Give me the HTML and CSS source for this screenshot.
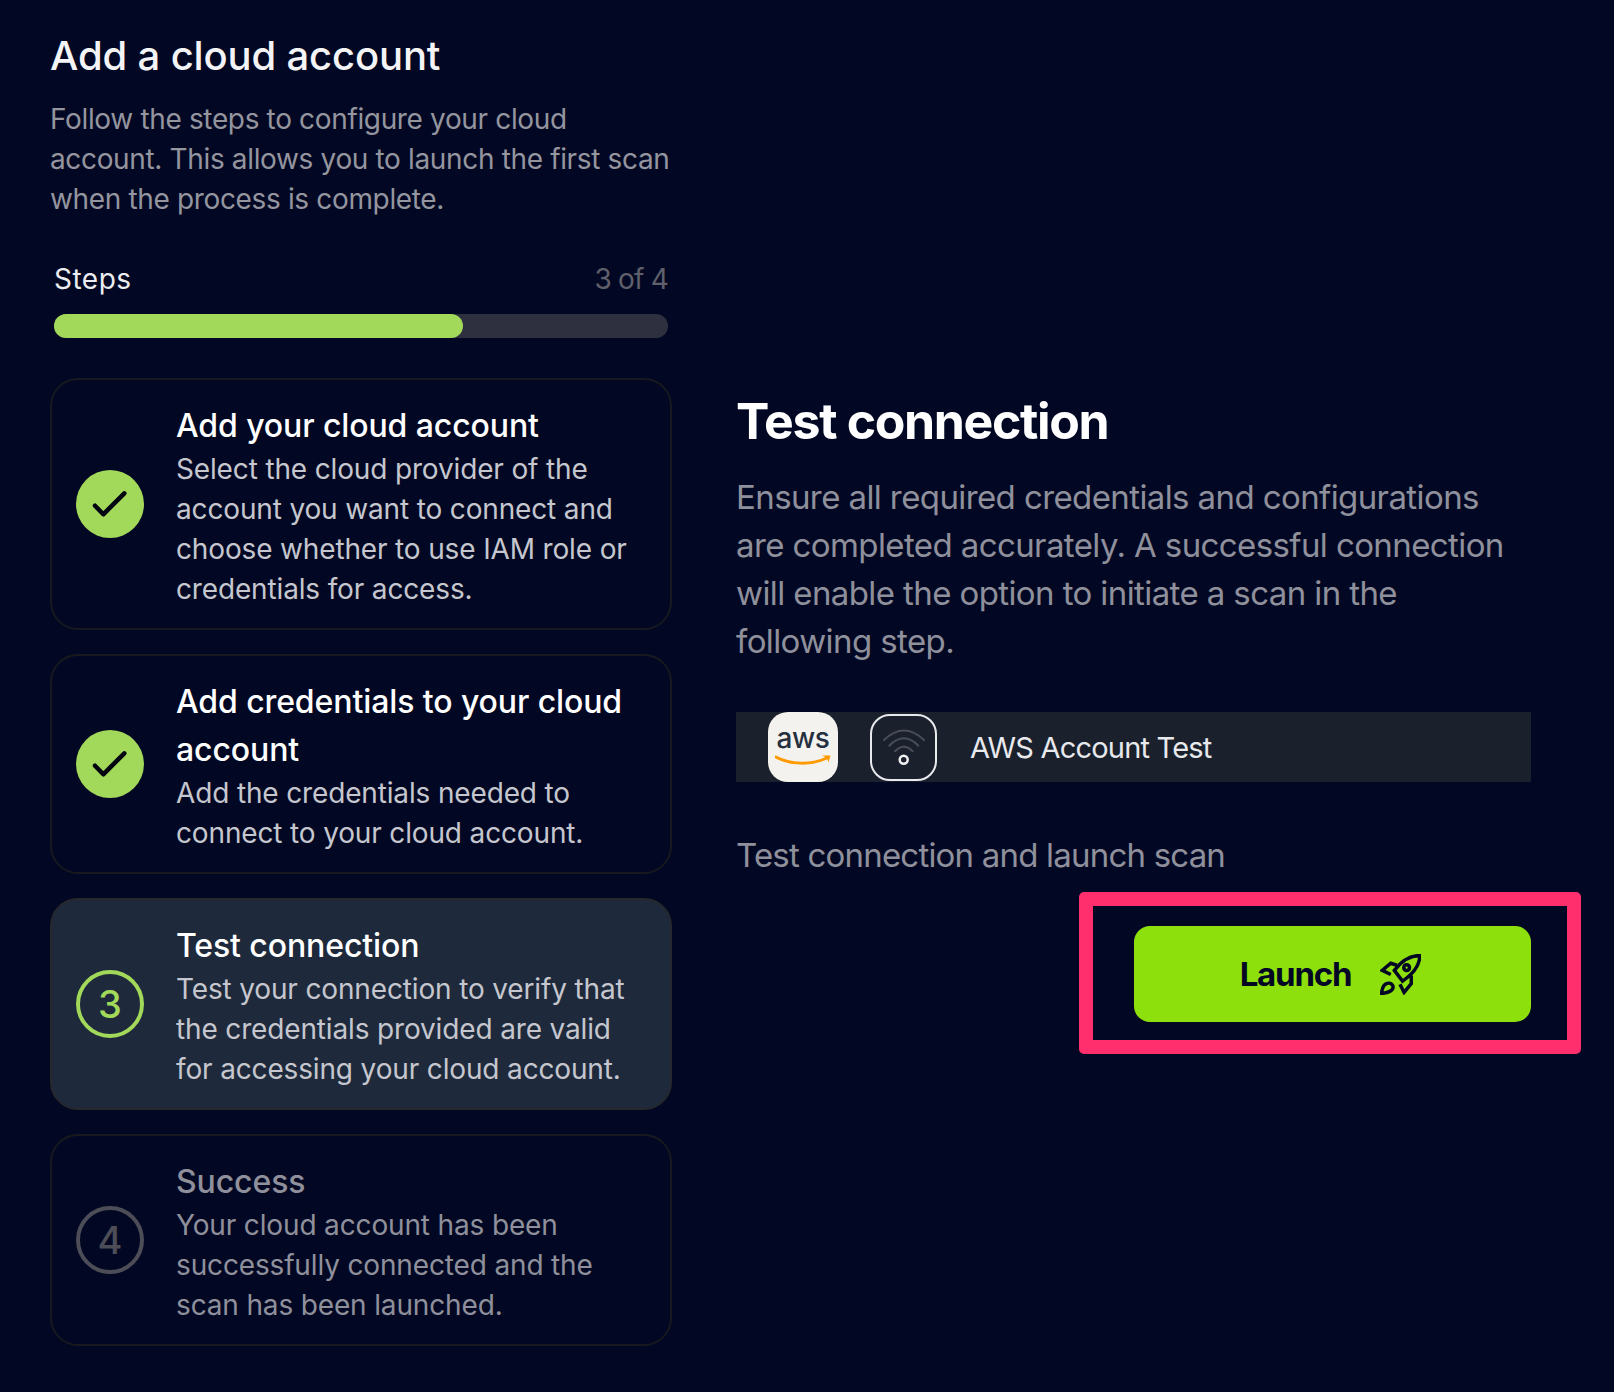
FILE: index.html
```html
<!DOCTYPE html>
<html lang="en">
<head>
<meta charset="utf-8">
<title>Add a cloud account</title>
<link rel="stylesheet" href="styles.css">
</head>
<body>
<main class="page">
  <section class="left">
    <h1 class="title">Add a cloud account</h1>
    <p class="intro">Follow the steps to configure your cloud<br>account. This allows you to launch the first scan<br>when the process is complete.</p>
    <div class="steps-head"><span class="steps-label">Steps</span><span class="steps-count">3 of 4</span></div>
    <div class="track"><div class="fill"></div></div>
    <ol class="steps">
      <li class="step">
        <span class="badge badge-done"><svg viewBox="0 0 68 68" class="check"><path d="M19 35.7l8.3 8.6 21-21"/></svg></span>
        <div class="step-body">
          <h2 class="step-title">Add your cloud account</h2>
          <p class="step-text">Select the cloud provider of the<br>account you want to connect and<br>choose whether to use IAM role or<br>credentials for access.</p>
        </div>
      </li>
      <li class="step">
        <span class="badge badge-done"><svg viewBox="0 0 68 68" class="check"><path d="M19 35.7l8.3 8.6 21-21"/></svg></span>
        <div class="step-body">
          <h2 class="step-title">Add credentials to your cloud<br>account</h2>
          <p class="step-text">Add the credentials needed to<br>connect to your cloud account.</p>
        </div>
      </li>
      <li class="step step-active">
        <span class="badge badge-current">3</span>
        <div class="step-body">
          <h2 class="step-title">Test connection</h2>
          <p class="step-text">Test your connection to verify that<br>the credentials provided are valid<br>for accessing your cloud account.</p>
        </div>
      </li>
      <li class="step step-todo">
        <span class="badge badge-todo">4</span>
        <div class="step-body">
          <h2 class="step-title">Success</h2>
          <p class="step-text">Your cloud account has been<br>successfully connected and the<br>scan has been launched.</p>
        </div>
      </li>
    </ol>
  </section>
  <section class="right">
    <h2 class="heading">Test connection</h2>
    <p class="lead">Ensure all required credentials and configurations<br>are completed accurately. A successful connection<br>will enable the option to initiate a scan in the<br>following step.</p>
    <div class="account">
      <span class="aws">
        <span class="aws-word">aws</span>
        <svg class="aws-smile" viewBox="0 0 56 10"><path class="smile-line" d="M1 2C15 10 37 10 52 3"/><path class="smile-head" d="M47 .5h8.500l-2 7-1.500-4.500z"/></svg>
      </span>
      <span class="signal">
        <svg viewBox="0 0 67 67"><path class="arc" d="M14 26Q34 7 54 26"/><path class="arc" d="M19.300 31.700Q34 17 48.300 31.700"/><path class="arc" d="M25 37.300Q34 28 42.700 37.300"/><circle class="dot" cx="33.700" cy="45.700" r="4"/></svg>
      </span>
      <span class="account-name">AWS Account Test</span>
    </div>
    <p class="sub">Test connection and launch scan</p>
    <div class="actions">
      <div class="highlight-wrap">
        <button class="launch" type="button">
          <span>Launch</span>
          <svg class="rocket" viewBox="0 0 40 40"><path d="M38.800 1.500C30 1.500 21.500 6 14 16L22 26.500C33 19 38.800 11 38.800 1.500Z"/><path d="M16.500 11L10.500 9L2.200 16L10.500 20"/><path d="M30.500 21L30.500 29L23.500 37.500L19.500 29.500"/><path d="M1.500 38.500C2 33 3.500 29 7.500 28.500C10.500 28 12.800 30 12.800 32.500C12.800 35.500 8 38 1.500 38.500Z"/><circle cx="26" cy="13.300" r="2.800"/></svg>
        </button>
        <span class="annotation"></span>
      </div>
    </div>
  </section>
</main>
</body>
</html>
```
FILE: styles.css
```css
* { box-sizing: border-box; }
html, body { margin: 0; padding: 0; }
body {
  background: #020823;
  font-family: Inter, "Noto Sans", sans-serif;
  color: #fff;
  height: 1392px;
  overflow: hidden;
}
h1, h2, p, ol { margin: 0; padding: 0; }
ol { list-style: none; }

.page {
  display: grid;
  grid-template-columns: 622px 795px;
  column-gap: 64px;
  padding: 28px 0 46px 50px;
}

/* left column */
.title {
  font-size: 40px;
  line-height: 56px;
  font-weight: 450;
  letter-spacing: -0.15px;
  color: #f4f4f6;
}
.intro {
  margin-top: 15px;
  font-size: 28px;
  line-height: 40px;
  letter-spacing: -0.35px;
  color: #94959f;
}
.steps-head {
  display: flex;
  justify-content: space-between;
  margin: 40px 4px 15px 4px;
  font-size: 28px;
  line-height: 40px;
}
.steps-label { color: #ecedf0; letter-spacing: 0.5px; }
.steps-count { color: #5f606b; letter-spacing: -0.8px; }
.track {
  height: 24px;
  margin: 0 4px 40px 4px;
  border-radius: 12px;
  background: #2e3040;
}
.fill {
  width: 66.6%;
  height: 100%;
  border-radius: 12px;
  background: #a3d95a;
}
.steps { display: flex; flex-direction: column; gap: 24px; }
.step {
  display: flex;
  align-items: center;
  gap: 32px;
  padding: 20px 24px;
  border: 2px solid #17191f;
  border-radius: 28px;
}
.step-active { background: #1e2a3b; border-color: #26282e; }
.badge {
  flex: none;
  width: 68px;
  height: 68px;
  border-radius: 50%;
  display: flex;
  align-items: center;
  justify-content: center;
  font-size: 38px;
  font-weight: 450;
  line-height: 1;
}
.badge-done { background: #a3d95a; }
.badge-current { border: 4px solid #a3d95a; color: #a3d95a; }
.badge-todo { border: 4px solid #4c4d57; color: #4c4d57; }
.check { width: 68px; height: 68px; }
.check path { fill: none; stroke: #02040f; stroke-width: 4.500; stroke-linecap: round; stroke-linejoin: round; }
.step-body { padding-top: 1px; margin-bottom: -1px; }
.step-title {
  padding-top: 1px;
  margin-bottom: -1px;
  font-size: 32px;
  line-height: 48px;
  font-weight: 450;
  letter-spacing: -0.1px;
  color: #fff;
}
.step-text {
  font-size: 28px;
  line-height: 40px;
  letter-spacing: -0.15px;
  color: #c5c6ce;
}
.step-todo .step-title, .step-todo .step-text { color: #8f909b; }

/* right column */
.right { padding-top: 361px; }
.heading {
  font-size: 50px;
  line-height: 64px;
  font-weight: 700;
  letter-spacing: -1.35px;
  color: #fff;
}
.lead {
  margin-top: 20px;
  font-size: 33px;
  line-height: 48px;
  letter-spacing: -0.6px;
  color: #8f909b;
}
.account {
  display: flex;
  align-items: center;
  height: 70px;
  margin-top: 47px;
  padding-left: 32px;
  background: #1a202c;
}
.aws {
  flex: none;
  width: 70px;
  height: 70px;
  padding-top: 14px;
  border-radius: 20px;
  background: #f4f2ef;
  display: flex;
  flex-direction: column;
  align-items: center;
  gap: 5px;
}
.aws-word {
  font-size: 28px;
  line-height: 24px;
  font-weight: 500;
  letter-spacing: -0.4px;
  color: #252f3e;
}
.aws-smile { width: 56px; height: 10px; flex: none; }
.smile-line { fill: none; stroke: #f90; stroke-width: 3; stroke-linecap: round; }
.smile-head { fill: #f90; }
.signal {
  flex: none;
  width: 67px;
  height: 67px;
  margin-left: 32px;
  border: 2px solid #e8e9ec;
  border-radius: 20px;
  display: flex;
}
.signal svg { width: 67px; height: 67px; margin: -2px; flex: none; }
.arc { fill: none; stroke: #4a4d58; stroke-width: 2; stroke-linecap: round; }
.dot { fill: none; stroke: #f0f0f2; stroke-width: 2.500; }
.account-name {
  margin-left: 33px;
  font-size: 29px;
  letter-spacing: -0.8px;
  color: #e8e9ec;
}
.sub {
  margin-top: 49px;
  font-size: 33px;
  line-height: 48px;
  letter-spacing: -0.8px;
  color: #8f909b;
}
.actions { display: flex; justify-content: flex-end; margin-top: 47px; }
.highlight-wrap { position: relative; }
.launch {
  width: 397px;
  height: 96px;
  padding: 0 4px 0 0;
  display: flex;
  align-items: center;
  justify-content: center;
  gap: 29px;
  border: 0;
  border-radius: 16px;
  background: #8ee00c;
  color: #020823;
  font: 700 33px Inter, sans-serif;
  letter-spacing: -1.2px;
}
.rocket { width: 41px; height: 41px; }
.rocket path, .rocket circle { fill: none; stroke: #020823; stroke-width: 3.400; stroke-linejoin: miter; }
.annotation {
  position: absolute;
  top: -34px;
  right: -50px;
  bottom: -32px;
  left: -55px;
  border: 14px solid #ff2e6c;
  border-radius: 5px;
}
```
